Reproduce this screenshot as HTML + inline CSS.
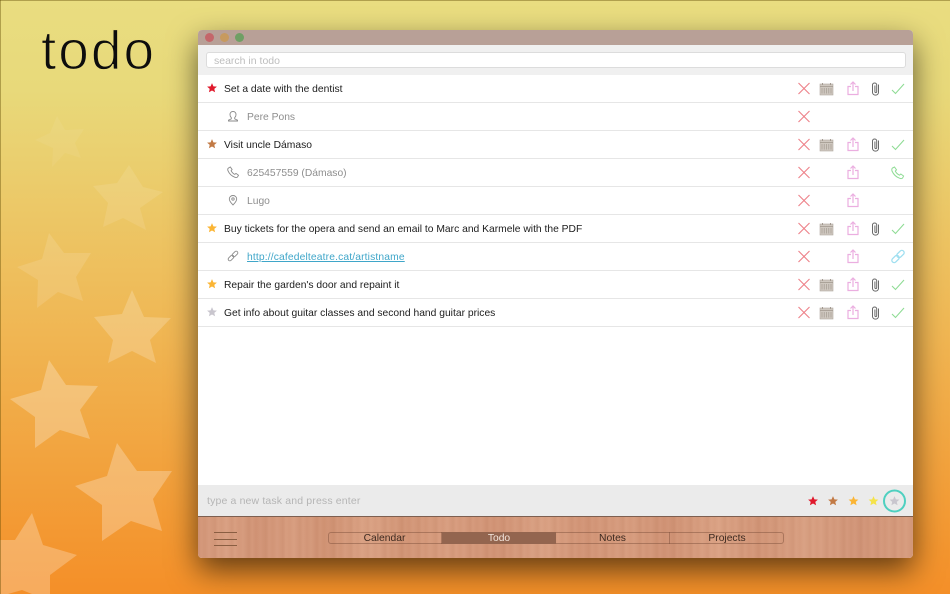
<!DOCTYPE html>
<html><head><meta charset="utf-8"><style>
html,body{margin:0;padding:0;height:594px;overflow:hidden}
body{width:950px;height:594px;overflow:hidden;position:relative;font-family:"Liberation Sans",sans-serif;background:linear-gradient(180deg,#e9dd80 0,#e8d97a 90px,#f0b552 340px,#f48f28 594px) no-repeat}
.el{position:absolute;left:0;top:0;width:1px;height:594px;background:rgba(90,70,0,.4)}
.et{position:absolute;left:0;top:0;width:950px;height:1px;background:rgba(90,70,0,.4)}
.bgstars{position:absolute;left:0;top:0}
.title{position:absolute;left:41px;top:14px;font-size:55px;line-height:72px;color:#0d0d0d;letter-spacing:2px;-webkit-text-stroke:1.2px #e8da7c}
.win{position:absolute;left:198px;top:30px;width:715px;height:528px;border-radius:4px;background:#fff;box-shadow:0 12px 30px rgba(0,0,0,.6);overflow:hidden}
.tb{position:absolute;left:0;top:0;width:715px;height:15px;background:#b8a097}
.dot{position:absolute;top:3px;width:9px;height:9px;border-radius:50%}
.sb{position:absolute;left:0;top:15px;width:715px;height:30px;background:#f0f0f0}
.inp{position:absolute;left:8px;top:7px;width:698px;height:14px;background:#fff;border:1px solid #dcdcdc;border-radius:3px;font-size:10.5px;line-height:16px;color:#bdbdbd;text-indent:7px}
.row{position:absolute;left:0;width:715px;height:27px;border-bottom:1px solid #e6e6e6;font-size:10.3px;line-height:29px;color:#1c1c1c;white-space:nowrap}
.row span{position:absolute;left:26px}
.row .s{left:49px;color:#8e8e8e}
.row a{color:#3fa6c9;text-decoration:underline;letter-spacing:.14px}
.ic{position:absolute;left:0;top:0}
.bar{position:absolute;left:0;top:455px;width:715px;height:31px;background:#ebebeb;font-size:10.5px;line-height:33px;color:#b5b5b5;letter-spacing:.15px;text-indent:9px}
.wood{position:absolute;left:0;top:486px;width:715px;height:42px;border-top:1px solid #7d5f50;box-sizing:border-box;background:repeating-linear-gradient(90deg,rgba(150,90,60,.07) 0,rgba(255,220,200,.05) 3px,rgba(150,90,60,.02) 7px,rgba(255,220,200,.06) 11px,rgba(150,90,60,.07) 17px),linear-gradient(90deg,#d19476 0,#d89e80 30px,#d09274 60px,#d69b7d 95px,#cf9172 130px,#daa183 170px,#d19475 205px,#d79c7e 250px,#d09274 300px,#d9a082 345px,#d19375 385px,#d69b7d 430px,#cf9173 470px,#daa183 520px,#d19476 560px,#d89f81 610px,#d09376 660px,#d69b7d 715px)}
.seg{position:absolute;left:130px;top:15px;width:456px;height:12px;box-sizing:border-box;border:1px solid rgba(120,75,55,.45);border-radius:3px}
.sg{position:absolute;top:-1px;height:12px;width:114px;text-align:center;font-size:10.3px;line-height:14px;color:#3d2a20;box-sizing:border-box}
.ham{position:absolute;left:16px;height:1px;width:23px;background:#8a5e42}
</style></head><body>
<svg class="bgstars" width="200" height="594" viewBox="0 0 200 594">
<g fill="#fff">
<path fill-opacity=".06" d="M57 116L65 130 84 129 75 143 81 158 65 153 52 167 53 148 35 140 50 133Z"/>
<path fill-opacity=".1" d="M129 165L143 187 163 192 140 208 146 230 123 218 103 227 108 203 93 186 117 183Z"/>
<path fill-opacity=".12" d="M49 233L64 253 91 253 76 277 83 301 58 292 37 308 38 280 17 267 42 259Z"/>
<path fill-opacity=".2" d="M132 290L144 317 171 318 150 340 156 363 132 351 108 363 113 340 94 317 122 314Z"/>
<path fill-opacity=".26" d="M49 360L66 385 98 386 80 410 90 439 60 430 35 448 35 417 10 399 41 390Z"/>
<path fill-opacity=".26" d="M117 443L137 471 172 471 153 499 162 531 131 521 102 541 102 505 75 486 107 476Z"/>
<path fill-opacity=".25" d="M32 513L43 545 77 555 50 575 50 594 32 594 22 590 8 594 0 594 0 540 15 540Z"/>
</g></svg>
<div class="el"></div><div class="et"></div>
<div class="title">todo</div>
<div class="win">
<div class="tb">
<div class="dot" style="left:7px;background:#c4666a"></div>
<div class="dot" style="left:22px;background:#c79a5f"></div>
<div class="dot" style="left:37px;background:#6f9f64"></div>
</div>
<div class="sb"><div class="inp">search in todo</div></div>
<div class="row" style="top:45px"><span>Set a date with the dentist</span></div>
<div class="row" style="top:73px"><span class="s">Pere Pons</span></div>
<div class="row" style="top:101px"><span>Visit uncle Dámaso</span></div>
<div class="row" style="top:129px"><span class="s">625457559 (Dámaso)</span></div>
<div class="row" style="top:157px"><span class="s">Lugo</span></div>
<div class="row" style="top:185px"><span>Buy tickets for the opera and send an email to Marc and Karmele with the PDF</span></div>
<div class="row" style="top:213px"><span class="s"><a>http://cafedelteatre.cat/artistname</a></span></div>
<div class="row" style="top:241px"><span>Repair the garden's door and repaint it</span></div>
<div class="row" style="top:269px"><span>Get info about guitar classes and second hand guitar prices</span></div>
<div class="bar">type a new task and press enter</div>
<div class="wood">
<div class="ham" style="top:15px"></div><div class="ham" style="top:22px"></div><div class="ham" style="top:28px"></div>
<div class="seg">
<div class="sg" style="left:-1px;border-right:1px solid rgba(120,75,55,.45)">Calendar</div>
<div class="sg" style="left:113px;background:#93654f;color:#f4e6dc">Todo</div>
<div class="sg" style="left:227px;border-right:1px solid rgba(120,75,55,.45)">Notes</div>
<div class="sg" style="left:341px">Projects</div>
</div>
</div>
</div>
<svg class="ic" width="950" height="594" viewBox="0 0 950 594" style="position:absolute;left:0;top:0">
<defs>
<path id="st" transform="scale(.88)" d="M0-5.600L1.600-1.900 5.600-1.600 2.600 1 3.500 4.900 0 2.800-3.500 4.900-2.600 1-5.600-1.600-1.600-1.900Z"/>
<path id="x" d="M-5.500-5.500L5.500 5.500M5.500-5.500L-5.500 5.500" stroke="#ee8088" stroke-width="1.100" fill="none"/>
<g id="cal"><rect x="-6.500" y="-5" width="13" height="11" fill="#cfc8c0" stroke="#b0a89f" stroke-width=".6"/><path d="M-6.500-2.500H6.500" stroke="#a39a90" stroke-width=".8"/><path d="M-4-6V-4M4-6V-4" stroke="#a39a90" stroke-width="1"/><path d="M-4.500-1V4.500M-2.300-1V4.500M0-1V4.500M2.300-1V4.500M4.500-1V4.500" stroke="#a39a90" stroke-width=".7"/></g>
<g id="sh" fill="none" stroke="#ebaee0" stroke-width="1.200"><path d="M-2-2H-5V6H5V-2H2"/><path d="M0 2.500V-6.500M-2.500-4L0-6.500 2.500-4"/></g>
<path id="cl" d="M-.6 -3V3.500A1 1 0 0 0 1.200 3.500V-4A2.200 2.200 0 0 0 -3 -4V4A3 2.600 0 0 0 3 4V-4" fill="none" stroke="#6a6a6a" stroke-width="1"/>
<path id="ck" d="M-6 1L-2.500 4.500 6-5" fill="none" stroke="#8fdc95" stroke-width="1.100"/>
</defs>
<use href="#st" x="212" y="88" fill="#e0192c"/>
<use href="#st" x="212" y="144" fill="#c27a45"/>
<use href="#st" x="212" y="228" fill="#fbb534"/>
<use href="#st" x="212" y="284" fill="#fbb534"/>
<use href="#st" x="212" y="312" fill="#c9c6ce"/>
<g fill="none" stroke="#8a8a8a" stroke-width=".9">
<path d="M233 111.500c-2 0-3 1.500-3 3.200 0 1.400.6 2.300 1.300 3v1.200l-2.800 1.300v.8h9v-.8l-2.800-1.300v-1.200c.7-.7 1.300-1.600 1.300-3 0-1.700-1-3.200-3-3.200z"/>
<path d="M228.500 168l1.800-1 1.800 2.500-1 1.200c.8 1.700 2 2.900 3.700 3.700l1.200-1 2.500 1.800-1 1.800c-.6.700-1.700.6-2.800.2-3.400-1.300-5.500-3.500-6.800-6.600-.3-1-.4-2 .6-2.600z"/>
<path d="M233 195.500c-2.200 0-3.700 1.600-3.700 3.500 0 2.300 2.200 4.300 3.700 6 1.500-1.700 3.700-3.700 3.700-6 0-1.900-1.500-3.500-3.700-3.500z"/><circle cx="233" cy="199" r="1.200"/>
<rect x="-3.300" y="-1.700" width="6.600" height="3.400" rx="1.700" transform="translate(231 258) rotate(-45)"/>
<rect x="-3.300" y="-1.700" width="6.600" height="3.400" rx="1.700" transform="translate(235 254) rotate(-45)"/>
</g>
<use href="#x" x="804" y="88.500"/><use href="#x" x="804" y="116.500"/><use href="#x" x="804" y="144.500"/><use href="#x" x="804" y="172.500"/><use href="#x" x="804" y="200.500"/><use href="#x" x="804" y="228.500"/><use href="#x" x="804" y="256.500"/><use href="#x" x="804" y="284.500"/><use href="#x" x="804" y="312.500"/>
<use href="#cal" x="826.500" y="89"/><use href="#cal" x="826.500" y="145"/><use href="#cal" x="826.500" y="229"/><use href="#cal" x="826.500" y="285"/><use href="#cal" x="826.500" y="313"/>
<use href="#sh" x="853" y="88.500"/><use href="#sh" x="853" y="144.500"/><use href="#sh" x="853" y="172.500"/><use href="#sh" x="853" y="200.500"/><use href="#sh" x="853" y="228.500"/><use href="#sh" x="853" y="256.500"/><use href="#sh" x="853" y="284.500"/><use href="#sh" x="853" y="312.500"/>
<use href="#cl" x="875.500" y="88.500"/><use href="#cl" x="875.500" y="144.500"/><use href="#cl" x="875.500" y="228.500"/><use href="#cl" x="875.500" y="284.500"/><use href="#cl" x="875.500" y="312.500"/>
<use href="#ck" x="898" y="89"/><use href="#ck" x="898" y="145"/><use href="#ck" x="898" y="229"/><use href="#ck" x="898" y="285"/><use href="#ck" x="898" y="313"/>
<path d="M892.500 168l2-1 2 2.800-1.200 1.300c1 1.900 2.300 3.200 4.200 4.100l1.300-1.200 2.800 2-1 2c-.7.700-1.900.7-3.100.2-3.700-1.400-6-3.800-7.500-7.200-.3-1.100-.4-2.300.5-3z" fill="none" stroke="#8fdc95" stroke-width="1"/>
<g fill="none" stroke="#9fdff0" stroke-width="1.300">
<rect x="-4.200" y="-2.300" width="8.400" height="4.600" rx="2.300" transform="translate(895.500 259) rotate(-45)"/>
<rect x="-4.200" y="-2.300" width="8.400" height="4.600" rx="2.300" transform="translate(900.500 254) rotate(-45)"/>
</g>
<use href="#st" x="813" y="501" fill="#e0192c"/>
<use href="#st" x="833" y="501" fill="#c27a45"/>
<use href="#st" x="853.500" y="501" fill="#fbb534"/>
<use href="#st" x="873.500" y="501" fill="#f5e34a"/>
<use href="#st" x="894.500" y="501" fill="#c9c6ce"/>
<circle cx="894.500" cy="501" r="10.500" fill="none" stroke="#4fd0c0" stroke-width="2"/>
</svg>
</body></html>
